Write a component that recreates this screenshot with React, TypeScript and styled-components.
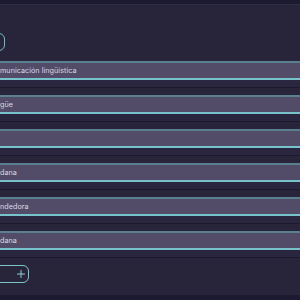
import React from 'react'
import styled, { createGlobalStyle } from 'styled-components'
import { Plus } from 'lucide-react'

const GlobalStyle = createGlobalStyle`
  html, body {
    margin: 0;
    padding: 0;
    background: #1c1a31;
  }
  body {
    font-family: Inter, "Noto Sans", sans-serif;
    overflow: hidden;
  }
`

const Screen = styled.div`
  width: 300px;
  height: 300px;
  display: flex;
  flex-direction: column;
  overflow: hidden;
  background: #1c1a31;
`

const TopStrip = styled.div`
  height: 4px;
  flex-shrink: 0;
  border-bottom: 1px solid #2f2c45;
`

const BottomStrip = styled.div`
  height: 5px;
  flex-shrink: 0;
`

// panel is wider than the window and shifted left, like the screenshot
const Panel = styled.section`
  flex: 1;
  display: flex;
  flex-direction: column;
  align-items: flex-start;
  margin-left: -14px;
  padding-top: 28px;
  background: #28253a;
`

const BackButton = styled.button`
  width: 19px;
  height: 18px;
  margin-bottom: 10px;
  box-sizing: border-box;
  border: 1.5px solid #6fbdc4;
  border-radius: 6px;
  background: transparent;
`

const List = styled.ul`
  list-style: none;
  margin: 0;
  padding: 0;
  align-self: stretch;
`

const Item = styled.li`
  padding-bottom: 7px;
  margin-bottom: 7px;
  background: #2a2640;
  border-bottom: 1px solid #1d1a2d;
`

const Field = styled.input`
  display: block;
  width: 100%;
  height: 19px;
  box-sizing: border-box;
  margin: 0;
  padding: 0 0 0 14px;
  border: none;
  border-top: 2px solid #5a7f8f;
  border-bottom: 2px solid #78c2cb;
  background: #534c69;
  color: #dcd8e6;
  font-family: Inter, "Noto Sans", sans-serif;
  font-size: 7.2px;
  letter-spacing: 0.05px;
  outline: none;
`

const AddButton = styled.button`
  width: 43px;
  height: 18px;
  box-sizing: border-box;
  display: flex;
  align-items: center;
  justify-content: flex-end;
  padding: 0 1.5px 0 0;
  border: 1.5px solid #7cc4cb;
  border-radius: 6px;
  background: transparent;
  color: #8fd0d4;
`

const rows = ['municación lingüística', 'güe', '', 'dana', 'ndedora', 'dana']

export default function App() {
  return (
    <>
      <GlobalStyle />
      <Screen>
        <TopStrip />
        <Panel>
          <BackButton aria-label="volver" />
          <List>
            {rows.map((text, i) => (
              <Item key={i}>
                <Field defaultValue={text} readOnly />
              </Item>
            ))}
          </List>
          <AddButton aria-label="añadir">
            <Plus size={12} strokeWidth={2} />
          </AddButton>
        </Panel>
        <BottomStrip />
      </Screen>
    </>
  )
}
